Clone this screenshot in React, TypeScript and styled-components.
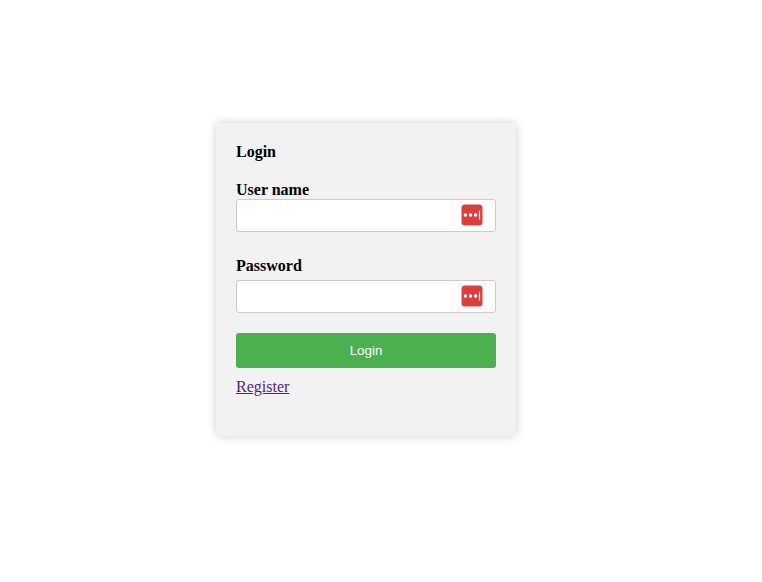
import React from "react";
import styled, { createGlobalStyle } from "styled-components";

const GlobalStyle = createGlobalStyle`
  body {
    margin: 0;
    background: #fff;
    font-family: "Liberation Serif", serif;
    font-size: 16px;
    color: #000;
  }
`;

const Page = styled.main`
  display: flex;
  align-items: flex-start;
  box-sizing: border-box;
  min-height: 582px;
  padding: 123px 0 0 216px;
`;

const Card = styled.form`
  display: flex;
  flex-direction: column;
  align-items: flex-start;
  box-sizing: border-box;
  width: 300px;
  height: 313px;
  padding: 20px;
  background: #f2f2f2;
  border-radius: 5px;
  box-shadow: 0 0 10px rgba(0, 0, 0, 0.2);
`;

const Title = styled.h1`
  margin: 0 0 20px;
  font-size: 16px;
  line-height: 18px;
`;

const Label = styled.label<{ $gap?: number }>`
  font-weight: bold;
  line-height: 18px;
  margin-bottom: ${(p) => p.$gap ?? 0}px;
`;

const Field = styled.div<{ $after: number }>`
  display: flex;
  align-items: flex-start;
  box-sizing: border-box;
  width: 260px;
  height: 33px;
  margin-bottom: ${(p) => p.$after}px;
  padding: 4px 12px 0 10px;
  background: #fff;
  border: 1px solid #ccc;
  border-radius: 3px;
`;

const Input = styled.input`
  flex: 1;
  min-width: 0;
  height: 22px;
  padding: 0;
  border: 0;
  outline: 0;
  background: transparent;
`;

const Submit = styled.button`
  width: 260px;
  height: 35px;
  margin: 0 0 10px;
  padding: 0;
  border: 0;
  border-radius: 3px;
  background: #4caf50;
  color: #fff;
  font: 13.333px "Liberation Sans", sans-serif;
`;

const Link = styled.a`
  color: #551a8b;
  line-height: 18px;
  text-decoration: underline;
`;

const KeyIcon = () => (
  <svg width="22" height="22" viewBox="0 0 22 22" aria-hidden="true">
    <rect x="0.5" y="0.5" width="21" height="21" rx="3.5" fill="#d93f3c" />
    <circle cx="4.4" cy="11" r="1.75" fill="#fff" />
    <circle cx="9.5" cy="11" r="1.75" fill="#fff" />
    <circle cx="14.6" cy="11" r="1.75" fill="#fff" />
    <rect x="17.9" y="6.7" width="1.2" height="8.9" rx="0.4" fill="#fff" />
  </svg>
);

export default function App() {
  return (
    <>
      <GlobalStyle />
      <Page>
        <Card onSubmit={(e) => e.preventDefault()}>
          <Title>Login</Title>
          <Label htmlFor="user">User name</Label>
          <Field $after={25}>
            <Input id="user" type="text" />
            <KeyIcon />
          </Field>
          <Label htmlFor="password" $gap={5}>Password</Label>
          <Field $after={20}>
            <Input id="password" type="password" />
            <KeyIcon />
          </Field>
          <Submit type="submit">Login</Submit>
          <Link href="#">Register</Link>
        </Card>
      </Page>
    </>
  );
}
